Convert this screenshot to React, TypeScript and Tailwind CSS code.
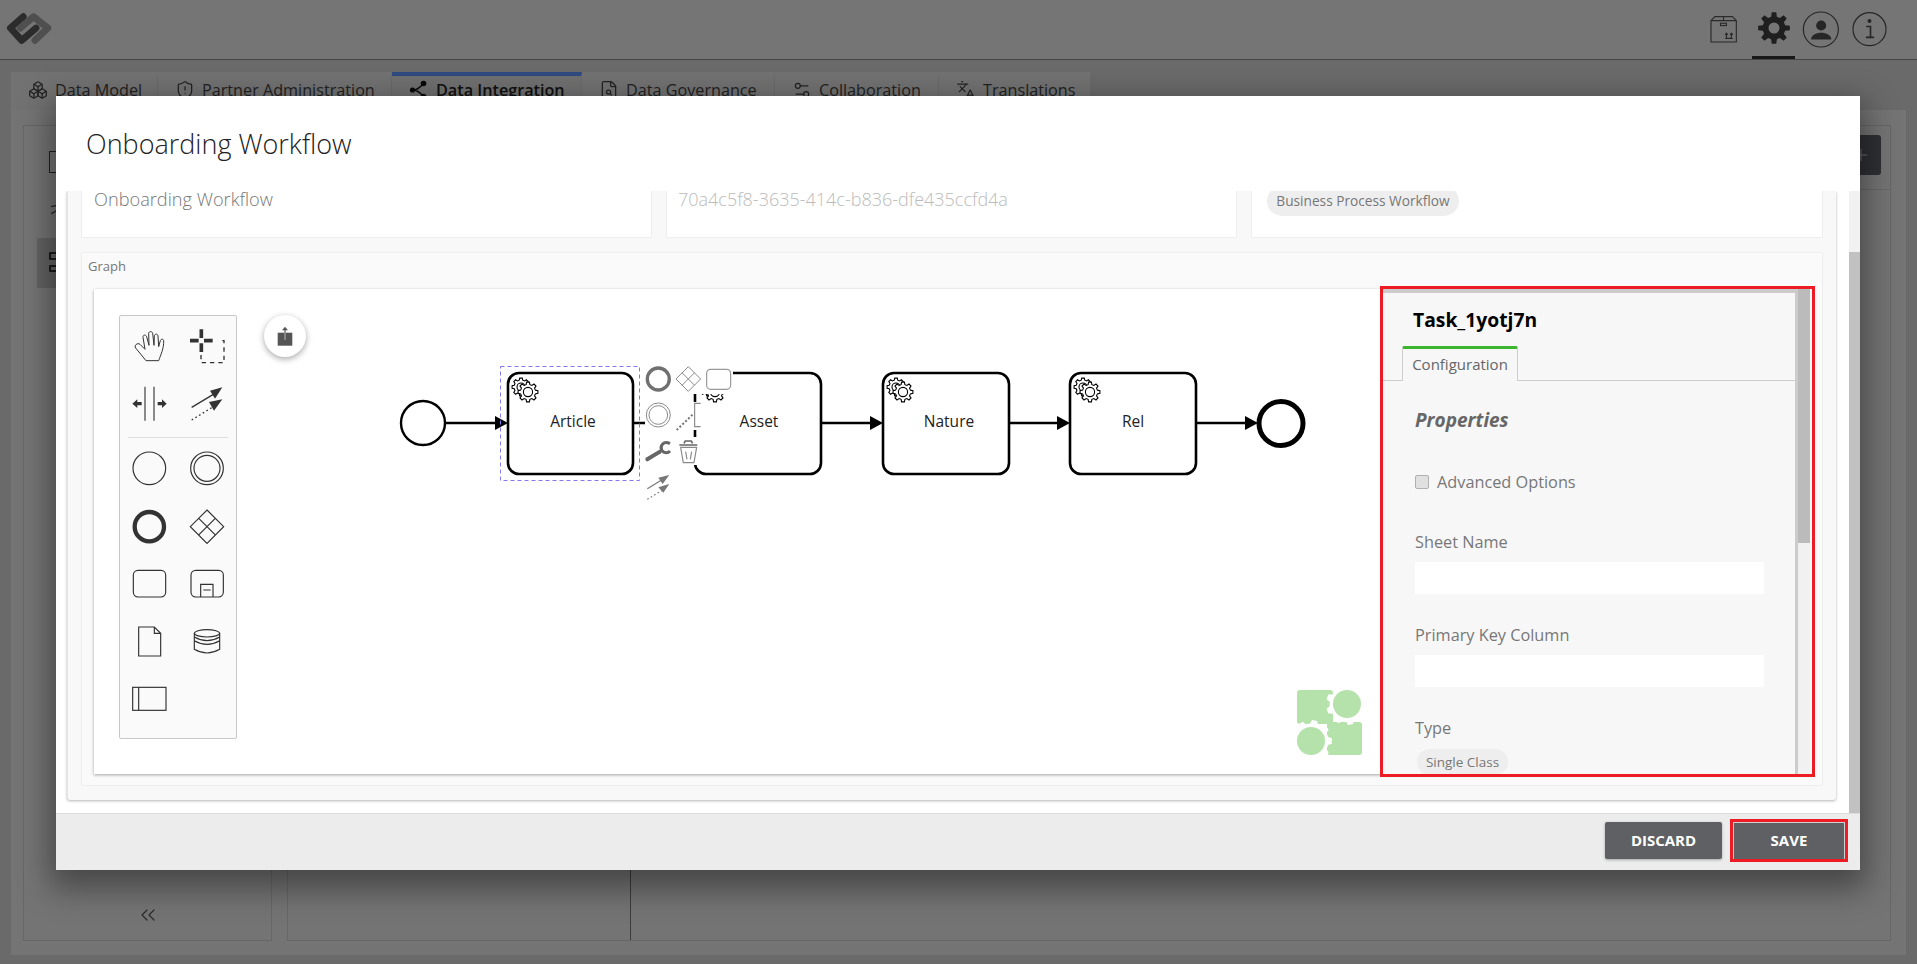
import React from "react";
import { Boxes, ChevronsLeft, FileSearch, Languages, Plus, Settings2, ShieldAlert } from "lucide-react";

// teeth outline for the small task gears and the puzzle cut outs
const gearPath = (cx: number, cy: number, R: number, r: number, teeth = 8) => {
  const pts: string[] = [];
  const step = (Math.PI * 2) / teeth;
  for (let i = 0; i < teeth; i++) {
    const a = i * step;
    [
      [-0.32, r],
      [-0.18, R],
      [0.18, R],
      [0.32, r],
    ].forEach(([k, rad]) => {
      const t = a + k * step;
      pts.push(`${(cx + Math.cos(t) * rad).toFixed(2)} ${(cy + Math.sin(t) * rad).toFixed(2)}`);
    });
  }
  return `M${pts.join("L")}Z`;
};

const tabs = [
  { label: "Data Model", width: "w-[147px]", icon: <Boxes size={20} strokeWidth={1.5} /> },
  { label: "Partner Administration", width: "w-[234px]", icon: <ShieldAlert size={20} strokeWidth={1.5} /> },
  { label: "Data Integration", width: "w-[190px]", active: true, icon: <IntegrationIcon /> },
  { label: "Data Governance", width: "w-[193px]", icon: <FileSearch size={20} strokeWidth={1.5} /> },
  { label: "Collaboration", width: "w-[164px]", icon: <Settings2 size={20} strokeWidth={1.5} /> },
  { label: "Translations", width: "w-[152px]", icon: <Languages size={20} strokeWidth={1.5} /> },
];

function IntegrationIcon() {
  return (
    <svg viewBox="0 0 20 20" className="w-[20px] h-[20px]">
      <path d="M4 10 Q9 10 14 4 M4 10 Q9 10 14 16" fill="none" stroke="#111" strokeWidth="1.3" />
      <circle cx="3.5" cy="10" r="2.6" fill="#111" />
      <circle cx="14.5" cy="3.5" r="2.8" fill="#111" />
      <circle cx="14.5" cy="16.5" r="2.8" fill="#111" />
    </svg>
  );
}

function TopBar() {
  return (
    <div className="h-[60px] bg-[#eaeaea] border-b border-[#8c8c8c] flex items-start justify-between">
      <svg viewBox="0 0 70 60" className="w-[70px] h-[59px]">
        <path d="M23 17 L10 28.5 L21.5 41 L36 28.5" fill="none" stroke="#585858" strokeWidth="7" strokeLinejoin="round" strokeLinecap="round" />
        <path d="M20 28.5 L33.5 17 L48 28.5 L35 41" fill="none" stroke="#9e9e9e" strokeWidth="7" strokeLinejoin="round" strokeLinecap="round" />
      </svg>
      <div className="h-[59px] flex items-center pr-[30px] text-[#4d4d4d]">
        <svg viewBox="30 48 82 82" className="w-[27px] h-[27px]" fill="none" stroke="#555" strokeWidth="3.5">
          <path d="M33 62 H110 V127 H33 Z M33 62 L45 50 H98 L110 62 M71 50 V62" />
          <rect x="62" y="70" width="18" height="7" />
          <path d="M80 114 V101 M95 114 V101 M76 105 L80 100 L84 105 M91 105 L95 100 L99 105 M76 116 H99" />
        </svg>
        <div className="w-[43px] h-[59px] ml-[15px] flex items-center justify-center border-b-[3px] border-[#333]">
          <svg viewBox="0 0 32 32" className="w-[32px] h-[32px]">
            <path
              d={gearPath(16, 16, 16, 11.5) + " M16 10.5 A5.5 5.5 0 1 0 16 21.5 A5.5 5.5 0 1 0 16 10.5 Z"}
              fill="#3e3e3e"
              fillRule="evenodd"
            />
          </svg>
        </div>
        <svg viewBox="305 28 110 110" className="w-[37px] h-[37px] ml-[7px]">
          <circle cx="361" cy="83" r="52" fill="none" stroke="#4d4d4d" strokeWidth="3.5" />
          <circle cx="362" cy="71" r="15" fill="#4d4d4d" />
          <path d="M332 113 C332 86 392 86 392 113 Z" fill="#4d4d4d" />
        </svg>
        <svg viewBox="457 28 106 106" className="w-[35px] h-[35px] ml-[13px]">
          <circle cx="510" cy="80" r="50" fill="none" stroke="#4d4d4d" strokeWidth="3.5" />
          <circle cx="510" cy="55" r="6" fill="#4d4d4d" />
          <path d="M500 72 H513 V105 M499 105 H524" fill="none" stroke="#4d4d4d" strokeWidth="5" />
        </svg>
      </div>
    </div>
  );
}

function TabBar() {
  return (
    <div className="flex pl-[11px] pt-[12px] h-[50px]">
      {tabs.map((t) => (
        <div
          key={t.label}
          className={
            "h-[38px] flex items-center gap-[7px] pl-[17px] pb-[6px] border-t-4 border-r border-r-[#d4d4d4] text-[16.2px] " +
            t.width +
            (t.active ? " border-t-[#5d95ff] bg-[#e0e0e0] font-semibold text-[#222]" : " border-t-[#e5e5e5] bg-[#e5e5e5] text-[#444]")
          }
        >
          {t.icon}
          <span>{t.label}</span>
        </div>
      ))}
    </div>
  );
}

function BackPage() {
  return (
    <div className="mx-[11px] h-[845px] bg-[#e8e8e8] pt-[15px] pb-[14px] pl-[12px] pr-[15px] flex gap-[15px]">
      <div className="w-[249px] border border-[#cfcfcf] flex flex-col">
        <div className="flex-1 bg-[#eaeaea] pl-[13px] pt-[25px]">
          <div className="ml-[12px] h-[22px] w-[30px] border border-[#444]" />
          <svg viewBox="0 0 24 20" className="w-[24px] h-[18px] ml-[12px] mt-[30px]" fill="none" stroke="#444" strokeWidth="1.4">
            <path d="M1 12 L8 8 L14 14 M1 4 L10 2" />
          </svg>
          <div className="mt-[17px] h-[50px] bg-[#c6c6c6] pl-[12px] pt-[14px]">
            <div className="w-[9px] h-[8px] border-2 border-[#333] rounded-[1px]" />
            <div className="w-[9px] h-[7px] border-2 border-[#333] rounded-[1px] mt-[5px]" />
          </div>
        </div>
        <div className="h-[51px] flex items-center justify-center text-[#555]">
          <ChevronsLeft size={24} strokeWidth={1.2} />
        </div>
      </div>
      <div className="flex-1 border border-[#cfcfcf] flex flex-col">
        <div className="h-[64px] border-b border-[#d0d0d0] flex items-start justify-end pt-[9px] pr-[9px]">
          <div className="w-[40px] h-[40px] rounded-[3px] bg-[#5f6066] text-[#ddd] flex items-center justify-center">
            <Plus size={20} strokeWidth={1.2} />
          </div>
        </div>
        <div className="flex-1 flex">
          <div className="w-[343px] border-r border-[#777]" />
        </div>
      </div>
    </div>
  );
}

function PaletteIcon({ cx, cy, children }: { cx: number; cy: number; children: React.ReactNode }) {
  return (
    <div className="flex items-center justify-center">
      <svg
        viewBox={`${cx - 72} ${cy - 72} 144 144`}
        className="w-[48px] h-[48px]"
        fill="none"
        stroke="#333"
        strokeWidth="3.5"
      >
        {children}
      </svg>
    </div>
  );
}

function Palette() {
  return (
    <div className="absolute left-[25px] top-[26px] w-[118px] h-[424px] bg-[#fafafa] border border-[#c8c8c8] rounded-[2px]">
      <div className="grid grid-cols-[58px_58px] auto-rows-[56px] pt-[3px]">
        <PaletteIcon cx={177} cy={201}>
          <path d="M168 242 L206 242 C212 225 222 205 221 182 C220 176 213 176 211 182 L206 200 L204 168 C203 160 194 161 193 168 L192 196 L188 160 C187 153 177 153 176 160 L177 196 L170 170 C168 163 158 164 159 172 L165 208 L150 193 C143 187 131 196 137 204 Z" strokeWidth="3" />
        </PaletteIcon>
        <PaletteIcon cx={351} cy={201}>
          <path d="M300 182 H326 M342 182 H368 M334 148 V174 M334 190 V216" strokeWidth="11" stroke="#333" />
          <path d="M333 225 V248 H402 V182 H386" strokeWidth="4" strokeDasharray="13 12" />
        </PaletteIcon>
        <PaletteIcon cx={177} cy={369}>
          <path d="M165 320 V422 M192 320 V422" stroke="#666" strokeWidth="4.5" />
          <path d="M127 371 L142 358 V366 H155 V376 H142 V384 Z M230 371 L216 358 V366 H203 V376 H216 V384 Z" fill="#333" stroke="none" />
        </PaletteIcon>
        <PaletteIcon cx={351} cy={369}>
          <path d="M305 382 L375 340" strokeWidth="4" />
          <path d="M397 322 L360 332 L375 356 Z" fill="#333" stroke="none" />
          <path d="M305 420 L370 380" strokeWidth="4" strokeDasharray="5 8" />
          <path d="M397 358 L357 366 L372 392 Z" fill="#333" stroke="none" />
        </PaletteIcon>
      </div>
      <div className="mx-[8px] mt-[6px] mb-[1px] border-t border-[#ddd]" />
      <div className="grid grid-cols-[58px_58px] auto-rows-[58px]">
        <PaletteIcon cx={177} cy={564}>
          <circle cx="178" cy="565" r="49" />
        </PaletteIcon>
        <PaletteIcon cx={351} cy={564}>
          <circle cx="351" cy="565" r="49" />
          <circle cx="351" cy="565" r="39" />
        </PaletteIcon>
        <PaletteIcon cx={177} cy={738}>
          <circle cx="178" cy="740" r="44" strokeWidth="13" />
        </PaletteIcon>
        <PaletteIcon cx={351} cy={738}>
          <path d="M351 690 L401 740 L351 790 L301 740 Z M327 716 L375 764 M375 716 L327 764" />
        </PaletteIcon>
        <PaletteIcon cx={177} cy={912}>
          <rect x="130" y="871" width="97" height="80" rx="14" />
        </PaletteIcon>
        <PaletteIcon cx={351} cy={912}>
          <rect x="303" y="871" width="97" height="80" rx="14" />
          <path d="M332 951 V913 H369 V951 M340 930 H362" />
        </PaletteIcon>
        <PaletteIcon cx={177} cy={1086}>
          <path d="M146 1041 H193 L212 1060 V1128 H146 Z M193 1041 V1060 H212" />
        </PaletteIcon>
        <PaletteIcon cx={351} cy={1086}>
          <path d="M313 1060 V1108 Q351 1130 389 1108 V1060 M313 1071 Q351 1093 389 1071 M313 1082 Q351 1104 389 1082" />
          <ellipse cx="351" cy="1060" rx="38" ry="11" />
        </PaletteIcon>
        <PaletteIcon cx={177} cy={1260}>
          <rect x="128" y="1222" width="100" height="69" />
          <path d="M146 1222 V1291" />
        </PaletteIcon>
      </div>
    </div>
  );
}

function TaskNode({ x, w, label, cx }: { x: number; w: number; label: string; cx: number }) {
  return (
    <g>
      <rect x={x} y={373} width={w} height={101} rx={11} fill="#fff" stroke="#000" strokeWidth={2.6} />
      <path d={gearPath(x + 13, 387, 9, 7)} fill="#fff" stroke="#000" strokeWidth={1.1} />
      <circle cx={x + 13} cy={387} r={4} fill="#fff" stroke="#000" strokeWidth={1.1} />
      <path d={gearPath(x + 20, 392, 10, 7.6)} fill="#fff" stroke="#000" strokeWidth={1.1} />
      <circle cx={x + 20} cy={392} r={4.6} fill="#fff" stroke="#000" strokeWidth={1.1} />
      <text x={cx} y={427} textAnchor="middle" fontSize={15.5} fill="#222" fontFamily="Open Sans, sans-serif">
        {label}
      </text>
    </g>
  );
}

function Flow({ x1, x2 }: { x1: number; x2: number }) {
  return (
    <g>
      <path d={`M${x1} 423 H${x2 - 10}`} stroke="#000" strokeWidth={2.6} />
      <path d={`M${x2 - 13} 416 L${x2} 423 L${x2 - 13} 430 Z`} fill="#000" />
    </g>
  );
}

function Diagram() {
  return (
    <svg viewBox="94 289 1289 485" className="block w-full h-full">
      <circle cx="423" cy="423" r="22" fill="#fff" stroke="#000" strokeWidth="2.4" />
      <Flow x1={445} x2={508} />
      <Flow x1={633} x2={695} />
      <Flow x1={821} x2={883} />
      <Flow x1={1009} x2={1070} />
      <Flow x1={1196} x2={1258} />
      <TaskNode x={508} w={125} label="Article" cx={573} />
      <TaskNode x={695} w={126} label="Asset" cx={759} />
      <TaskNode x={883} w={126} label="Nature" cx={949} />
      <TaskNode x={1070} w={126} label="Rel" cx={1133} />
      <circle cx="1281" cy="423.5" r="22" fill="#fff" stroke="#000" strokeWidth="5" />

      {/* selection outline */}
      <rect x="500.5" y="366.5" width="139" height="114" fill="none" stroke="#8478f0" strokeWidth="1" strokeDasharray="4 3" />

      {/* context pad, drawn in 3x coordinates */}
      <g fill="#fff">
        <rect x="645" y="365" width="28" height="29" />
        <rect x="673" y="365" width="31" height="29" />
        <rect x="704" y="365" width="29" height="29" />
        <rect x="645" y="402" width="28" height="28" />
        <rect x="673" y="402" width="30" height="28" />
        <rect x="645" y="437" width="28" height="28" />
        <rect x="673" y="437" width="30" height="28" />
        <rect x="645" y="473" width="28" height="28" />
      </g>
      <g transform="translate(380 340) scale(0.3333)" fill="none">
        <circle cx="835" cy="117" r="33" stroke="#707070" strokeWidth="10" />
        <path d="M925 80 L962 117 L925 154 L888 117 Z M906 98 L944 136 M944 98 L906 136" stroke="#8a8a8a" strokeWidth="3" />
        <rect x="980" y="88" width="72" height="60" rx="12" stroke="#999" strokeWidth="3.5" />
        <circle cx="835" cy="225" r="36" stroke="#8a8a8a" strokeWidth="3" />
        <circle cx="835" cy="225" r="28" stroke="#8a8a8a" strokeWidth="3" />
        <path d="M962 190 H944 V260 H962" stroke="#8a8a8a" strokeWidth="3.5" />
        <path d="M890 270 L940 222" stroke="#777" strokeWidth="6" strokeDasharray="6 6" />
        <path d="M802 358 L840 335" stroke="#666" strokeWidth="12" strokeLinecap="round" />
        <path d="M870 311 C850 300 838 320 846 332 C852 340 864 340 870 333" stroke="#666" strokeWidth="9" />
        <path d="M912 310 L916 303 H934 L938 310 M898 315 H952" stroke="#666" strokeWidth="5" />
        <path d="M902 322 L910 368 H942 L950 322 Z M917 335 L921 358 M935 335 L931 358" stroke="#8a8a8a" strokeWidth="3.5" />
        <path d="M802 446 L845 420" stroke="#777" strokeWidth="3.5" />
        <path d="M868 405 L835 413 L848 432 Z" fill="#777" />
        <path d="M802 478 L845 452" stroke="#777" strokeWidth="3.5" strokeDasharray="5 7" />
        <path d="M868 432 L835 442 L850 458 Z" fill="#777" />
      </g>

      {/* watermark logo */}
      <g fill="#b5e2ab">
        <rect x="1297" y="690" width="36" height="34" rx="3" />
        <rect x="1327" y="722" width="35" height="33" rx="3" />
        <path d={gearPath(1347, 704, 21, 17.5, 9)} fill="#fff" />
        <path d={gearPath(1311, 741, 21, 17.5, 9)} fill="#fff" />
        <circle cx="1347" cy="704" r="14" />
        <circle cx="1311" cy="741" r="14" />
      </g>
    </svg>
  );
}

function FieldLabel({ children, className = "" }: { children: React.ReactNode; className?: string }) {
  return <div className={"ml-[32px] text-[16.3px] leading-[20px] text-[#777] " + className}>{children}</div>;
}

function PropertiesPanel() {
  return (
    <div className="w-[429px] h-full flex bg-[#f7f7f7] overflow-hidden relative">
      <div className="w-[415px] border-t-4 border-t-[#ccc] border-r-[3px] border-r-[#ccc]">
        <div className="h-[53px] pl-[30px] pt-[1px] flex items-center text-[19.3px] font-bold text-black">Task_1yotj7n</div>
        <div className="h-[35px] border-b border-[#ccc] pl-[19px]">
          <div className="w-[116px] h-[35px] pb-[2px] border-t-[3px] border-t-[#3cb531] border-x border-x-[#ccc] rounded-t-[2px] bg-[#f7f7f7] flex items-center justify-center text-[15px] text-[#666]">
            Configuration
          </div>
        </div>
        <div className="ml-[32px] mt-[27px] text-[19px] leading-[24px] font-bold italic text-[#666]">Properties</div>
        <div className="ml-[32px] mt-[40px] h-[20px] flex items-center gap-[8px] text-[16.3px] text-[#777]">
          <span className="w-[14px] h-[14px] rounded-[2px] border border-[#b0b0b0] bg-[#e0e0e0]" />
          Advanced Options
        </div>
        <FieldLabel className="mt-[40px]">Sheet Name</FieldLabel>
        <div className="ml-[32px] mt-[10px] w-[349px] h-[32px] bg-white" />
        <FieldLabel className="mt-[31px]">Primary Key Column</FieldLabel>
        <div className="ml-[32px] mt-[10px] w-[349px] h-[32px] bg-white" />
        <FieldLabel className="mt-[31px]">Type</FieldLabel>
        <div className="ml-[34px] mt-[11px] w-[91px] h-[26px] rounded-full bg-[#eeeeee] flex items-center justify-center text-[13.5px] text-[#777]">
          Single Class
        </div>
      </div>
      <div className="w-[12px] bg-[#f1f1f1]">
        <div className="h-[254px] bg-[#bbbbbb]" />
      </div>
    </div>
  );
}

function ModalBody() {
  return (
    <div className="h-[622px] flex">
      <div className="w-[1793px] pl-[11px]">
        <div className="w-[1769px] h-[609px] bg-[#f8f8f8] rounded-b-[3px] border-l border-[#e4e4e4] shadow-[0_1px_3px_rgba(0,0,0,0.3)] pl-[13px]">
          <div className="flex gap-[14px] h-[47px]">
            <div className="w-[571px] bg-white border border-t-0 border-[#eeeeee] pl-[12px]">
              <div className="text-[18.2px] leading-[16px] font-light text-[#777]">Onboarding Workflow</div>
            </div>
            <div className="w-[571px] bg-white border border-t-0 border-[#eeeeee] pl-[11px]">
              <div className="text-[18px] leading-[16px] font-light text-[#bbb]">70a4c5f8-3635-414c-b836-dfe435ccfd4a</div>
            </div>
            <div className="w-[572px] bg-white border border-t-0 border-[#eeeeee] pl-[15px]">
              <div className="-mt-[5px] w-[192px] h-[30px] rounded-full bg-[#eeeeee] flex items-center justify-center text-[13.7px] text-[#777]">
                Business Process Workflow
              </div>
            </div>
          </div>
          <div className="mt-[14px] w-[1742px] h-[534px] border border-[#eeeeee] bg-[#fafafa]">
            <div className="h-[36px] pl-[6px] pt-[4px] text-[13px] leading-[18px] text-[#777]">Graph</div>
            <div className="ml-[12px] w-[1718px] h-[485px] flex bg-white shadow-[0_1px_3px_rgba(0,0,0,0.35)]">
              <div className="relative w-[1289px] h-full">
                <Diagram />
                <Palette />
                <div className="absolute left-[170px] top-[26px] w-[42px] h-[42px] rounded-full bg-white shadow-[0_2px_6px_rgba(0,0,0,0.35)] flex items-center justify-center">
                  <svg viewBox="0 0 42 42" className="w-[42px] h-[42px]">
                    <rect x="13.7" y="17.7" width="14.6" height="13" fill="#555" />
                    <path d="M21 14 V17.7" stroke="#555" strokeWidth="1.2" />
                    <path d="M21 17.7 V25" stroke="#aaa" strokeWidth="1.2" />
                    <path d="M21 11.7 L18 15.2 H24 Z" fill="#555" />
                  </svg>
                </div>
              </div>
              <div className="outline-3 outline-[#ed1c24] h-full">
                <PropertiesPanel />
              </div>
            </div>
          </div>
        </div>
      </div>
      <div className="w-[11px] bg-[#f1f1f1] relative z-20">
        <div className="mt-[61px] h-[561px] bg-[#c1c1c1]" />
      </div>
    </div>
  );
}

function ModalFooter() {
  return (
    <div className="flex-1 bg-[#ececec] border-t border-[#dddddd] flex items-center justify-end pr-[12px] pb-[4px] gap-[8px]">
      <button className="w-[117px] h-[37px] rounded-[2px] bg-[#5f6064] text-white text-[15px] font-bold shadow-[0_1px_3px_rgba(0,0,0,0.3)]">
        DISCARD
      </button>
      <div className="border-[3px] border-[#ed1c24]">
        <button className="block w-[112px] h-[37px] bg-[#5f6064] border border-[#d0d0d0] border-b-0 text-white text-[15px] font-bold">
          SAVE
        </button>
      </div>
    </div>
  );
}

export default function App() {
  return (
    <div className="relative w-[1917px] h-[964px] overflow-hidden bg-[#d4d4d4] font-['Open_Sans',sans-serif]">
      <TopBar />
      <TabBar />
      <BackPage />
      <div className="absolute inset-0 bg-black/50" />
      <div className="absolute left-[56px] top-[96px] w-[1804px] h-[774px] bg-white flex flex-col shadow-[0_12px_30px_6px_rgba(0,0,0,0.4)]">
        <div className="relative z-10 h-[95px] bg-white flex items-center pl-[30px] pt-[2px] text-[27px] font-light text-[#222]">Onboarding Workflow</div>
        <ModalBody />
        <ModalFooter />
      </div>
    </div>
  );
}
